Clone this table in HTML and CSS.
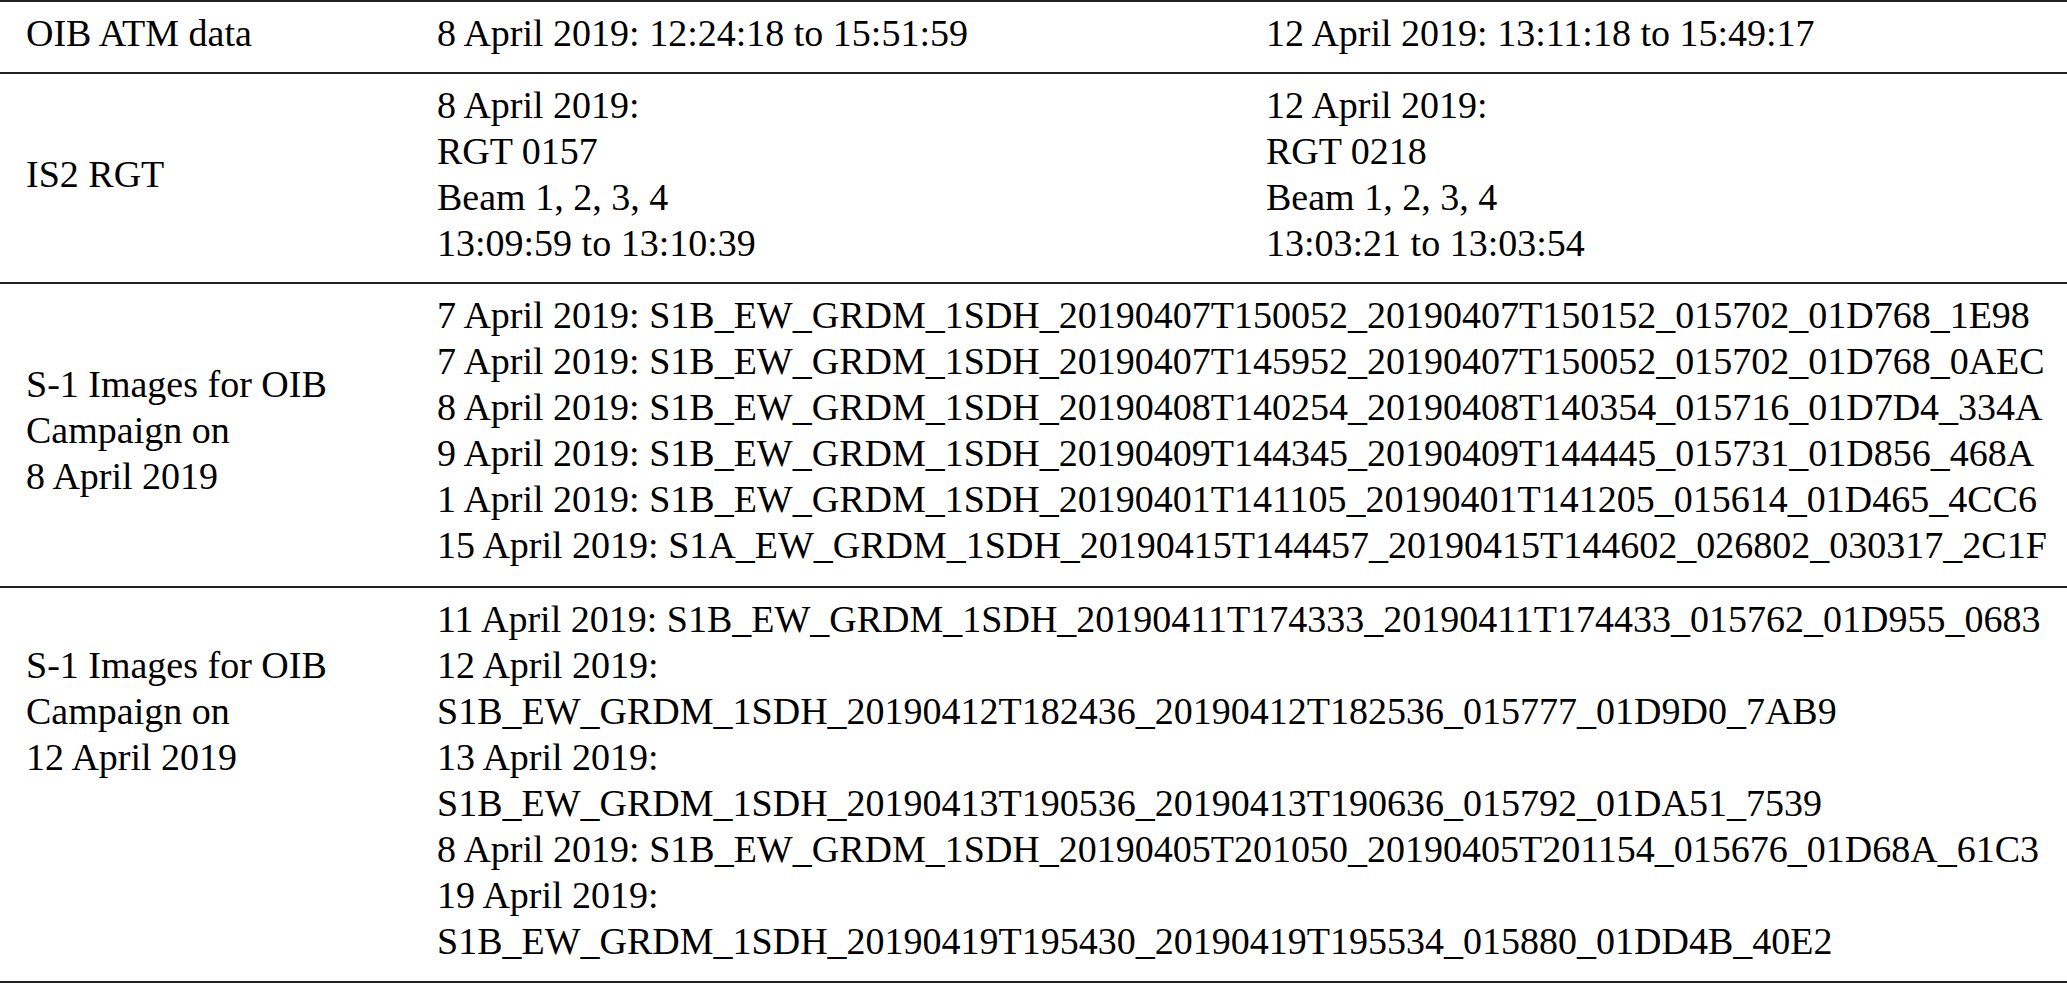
FILE: index.html
```html
<!DOCTYPE html>
<html>
<head>
<meta charset="utf-8">
<link rel="stylesheet" href="styles.css">
</head>
<body>
<table class="data">
  <colgroup>
    <col class="c1">
    <col class="c2">
    <col class="c3">
  </colgroup>
  <tr class="r1">
    <td class="label">OIB ATM data</td>
    <td>8 April 2019: 12:24:18 to 15:51:59</td>
    <td>12 April 2019: 13:11:18 to 15:49:17</td>
  </tr>
  <tr class="r2">
    <td class="label">IS2 RGT</td>
    <td>8 April 2019:<br>RGT 0157<br>Beam 1, 2, 3, 4<br>13:09:59 to 13:10:39</td>
    <td>12 April 2019:<br>RGT 0218<br>Beam 1, 2, 3, 4<br>13:03:21 to 13:03:54</td>
  </tr>
  <tr class="r3">
    <td class="label">S-1 Images for OIB<br>Campaign on<br>8 April 2019</td>
    <td colspan="2" class="list">
      <div>7 April 2019: S1B_EW_GRDM_1SDH_20190407T150052_20190407T150152_015702_01D768_1E98</div>
      <div>7 April 2019: S1B_EW_GRDM_1SDH_20190407T145952_20190407T150052_015702_01D768_0AEC</div>
      <div>8 April 2019: S1B_EW_GRDM_1SDH_20190408T140254_20190408T140354_015716_01D7D4_334A</div>
      <div>9 April 2019: S1B_EW_GRDM_1SDH_20190409T144345_20190409T144445_015731_01D856_468A</div>
      <div>1 April 2019: S1B_EW_GRDM_1SDH_20190401T141105_20190401T141205_015614_01D465_4CC6</div>
      <div>15 April 2019: S1A_EW_GRDM_1SDH_20190415T144457_20190415T144602_026802_030317_2C1F</div>
    </td>
  </tr>
  <tr class="r4">
    <td class="label top">S-1 Images for OIB<br>Campaign on<br>12 April 2019</td>
    <td colspan="2" class="list">
      <div>11 April 2019: S1B_EW_GRDM_1SDH_20190411T174333_20190411T174433_015762_01D955_0683</div>
      <div>12 April 2019:</div>
      <div>S1B_EW_GRDM_1SDH_20190412T182436_20190412T182536_015777_01D9D0_7AB9</div>
      <div>13 April 2019:</div>
      <div>S1B_EW_GRDM_1SDH_20190413T190536_20190413T190636_015792_01DA51_7539</div>
      <div>8 April 2019: S1B_EW_GRDM_1SDH_20190405T201050_20190405T201154_015676_01D68A_61C3</div>
      <div>19 April 2019:</div>
      <div>S1B_EW_GRDM_1SDH_20190419T195430_20190419T195534_015880_01DD4B_40E2</div>
    </td>
  </tr>
</table>
</body>
</html>
```
FILE: styles.css
```css
html, body {
  margin: 0;
  padding: 0;
  background: #fff;
}

.data {
  border-collapse: collapse;
  table-layout: fixed;
  width: 2067px;
  font-family: "Liberation Serif", "Times New Roman", Times, serif;
  font-size: 38px;
  line-height: 46px;
  color: #000;
}

.c1 { width: 437px; }
.c2 { width: 829px; }
.c3 { width: 801px; }

.data tr {
  border-top: 2px solid #222;
}

.data tr.r4 {
  border-bottom: 2px solid #222;
}

.data td {
  padding: 8px 0 16px 0;
  vertical-align: top;
  white-space: nowrap;
}

.data td.label {
  padding-left: 26px;
  vertical-align: middle;
}

.data td.label.top {
  vertical-align: top;
  padding-top: 54px;
}

.r3 td {
  padding-bottom: 18px;
}

.r4 td {
  padding-bottom: 17px;
}
```
